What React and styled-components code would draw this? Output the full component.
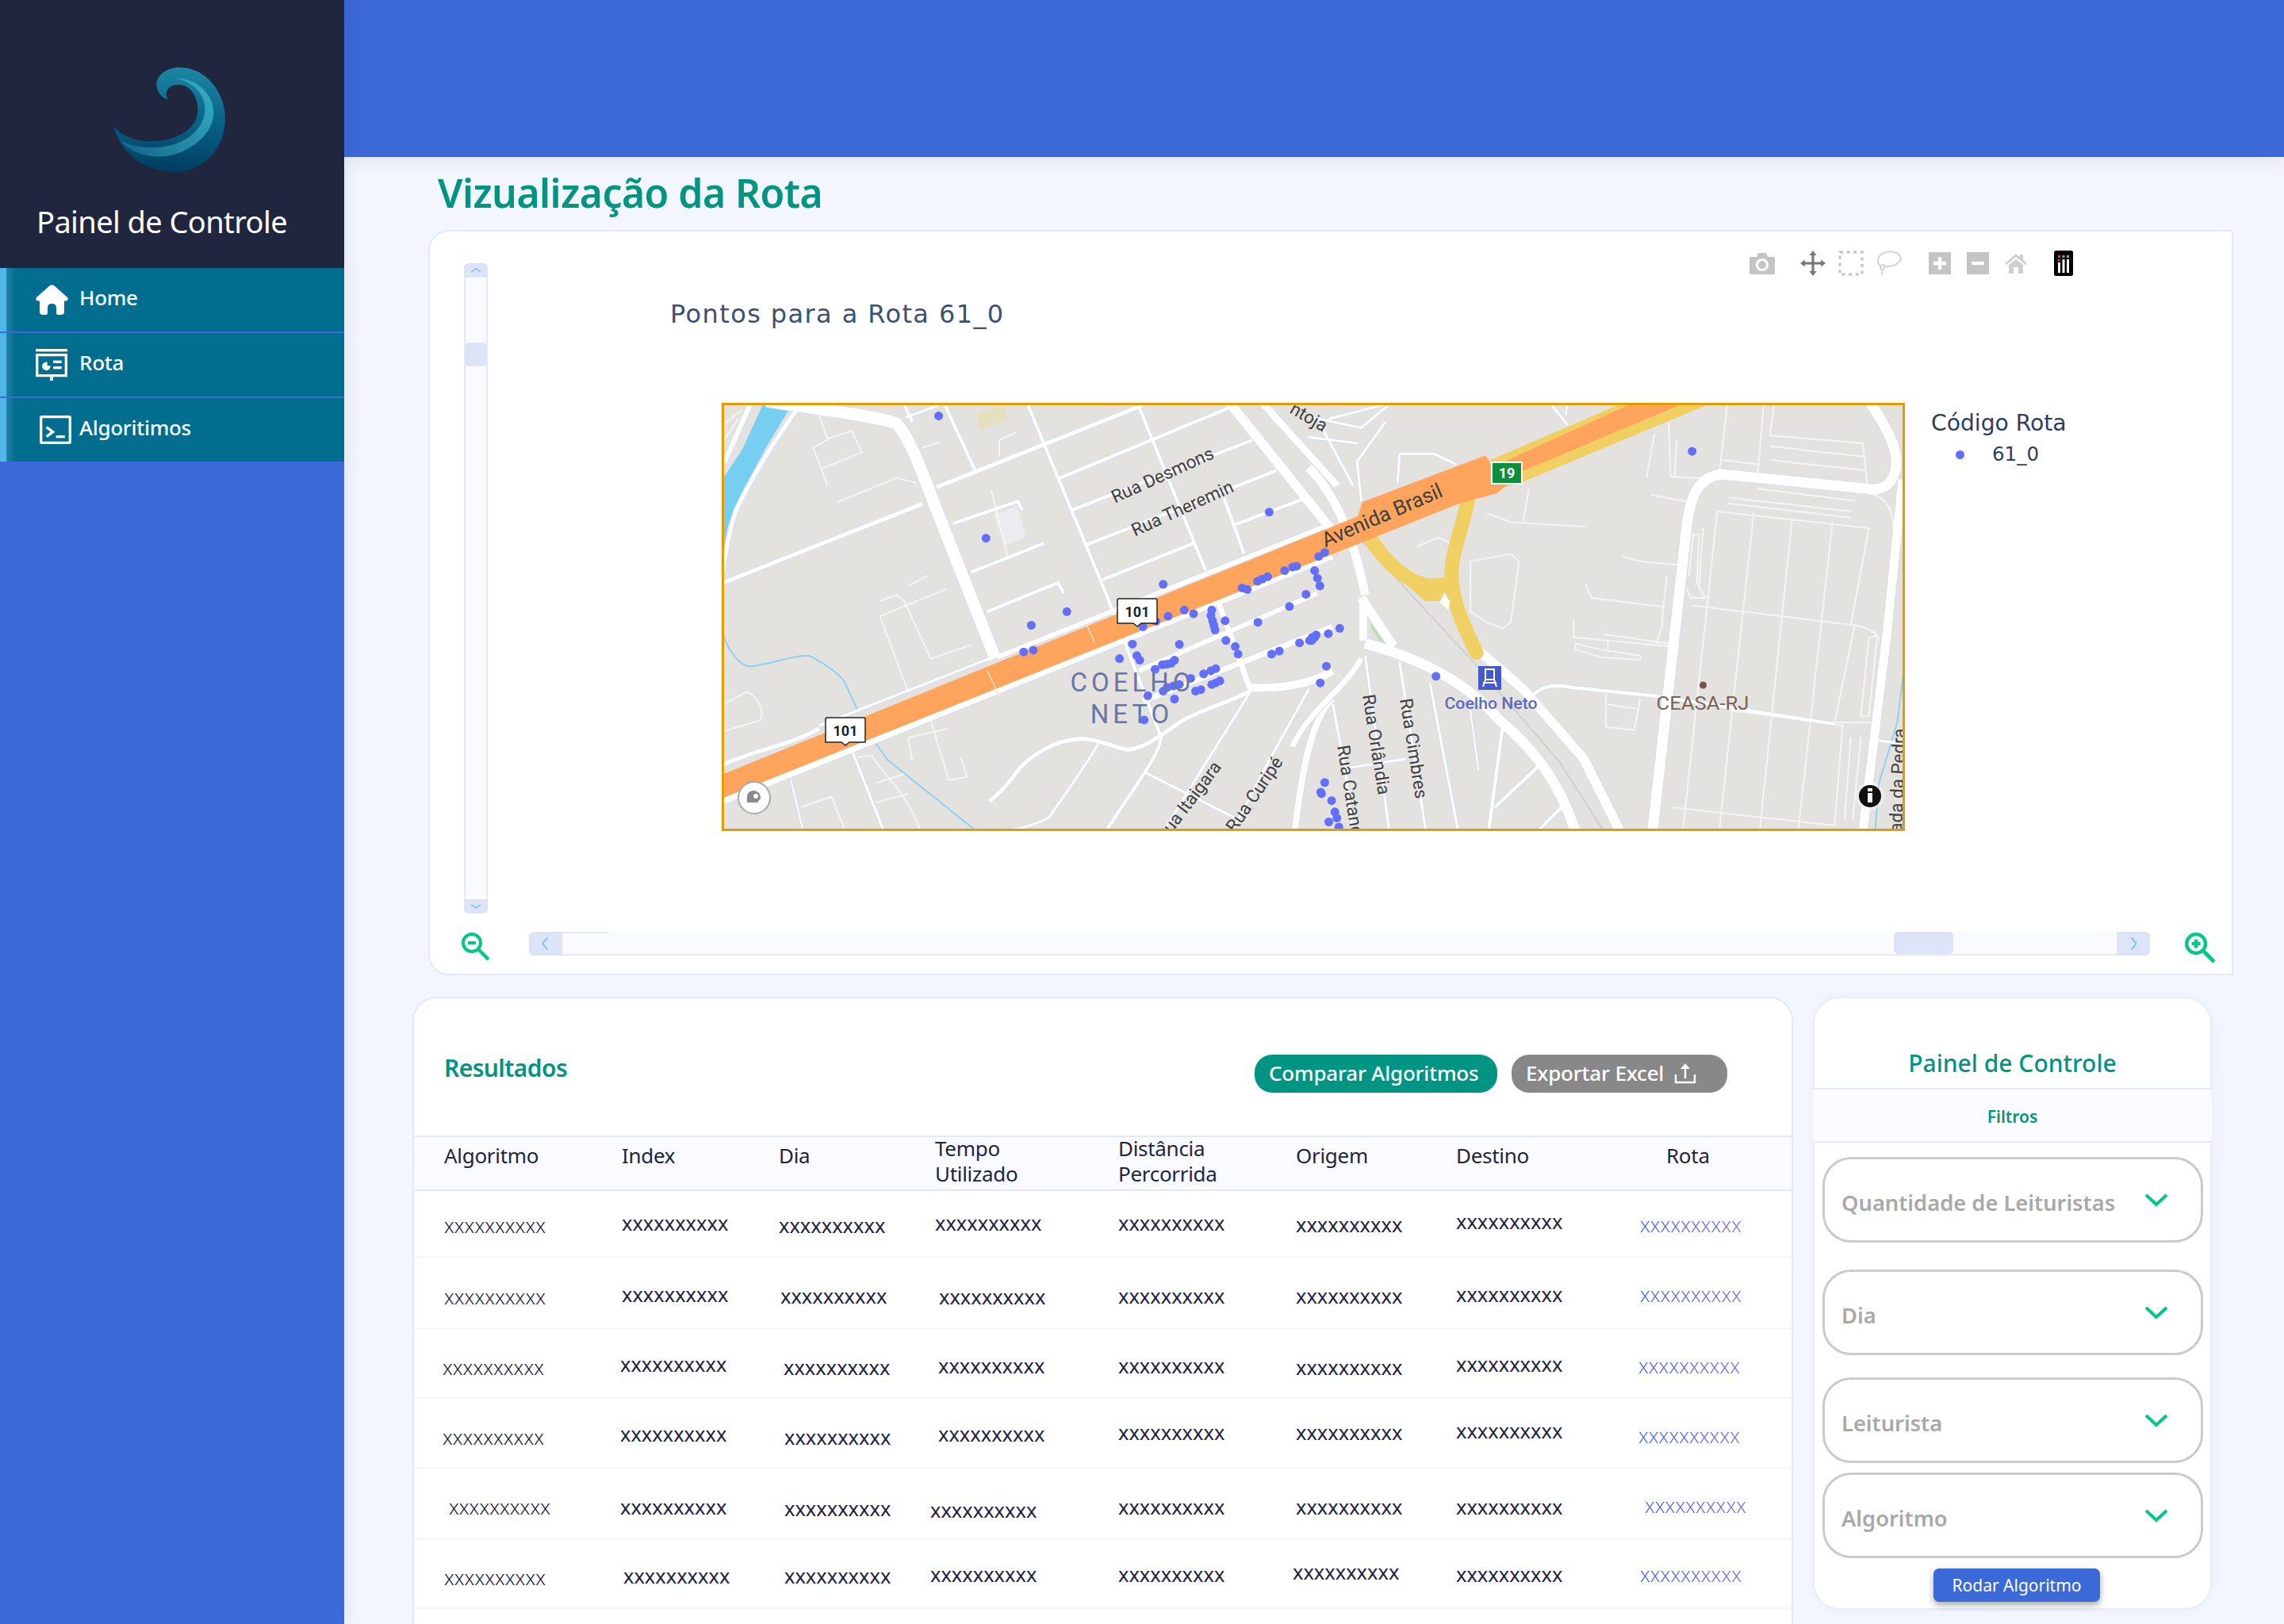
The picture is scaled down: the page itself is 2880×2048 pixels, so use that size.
import React from 'react';
import styled, { createGlobalStyle } from 'styled-components';

const Global = createGlobalStyle`
    html, body {
        margin: 0;
        padding: 0;
        background: #f3f6fe;
        font-family: "Noto Sans", "Open Sans", sans-serif;
    }
    * { box-sizing: border-box; }
`;

const Page = styled.div`
    display: flex;
    width: 2880px;
    height: 2048px;
    overflow: hidden;
`;

/* ---------- sidebar ---------- */
const Sidebar = styled.aside`
    width: 434px;
    flex: none;
    background: #3b69d8;
    box-shadow: 0 0 24px rgba(40, 60, 130, 0.12);
    z-index: 2;
`;
const Brand = styled.div`
    height: 338px;
    background: #21263f;
    padding-top: 60px;
`;
const BrandLogo = styled.svg`
    display: block;
    margin-left: 120px;
`;
const BrandName = styled.div`
    margin: 14px 0 0 46px;
    font-size: 38px;
    line-height: 50px;
    color: #fff;
    letter-spacing: -0.6px;
`;
const NavItem = styled.a`
    display: flex;
    align-items: center;
    height: 80px;
    margin-bottom: 2px;
    padding-left: 45px;
    color: #fff;
    background: linear-gradient(90deg, #4fb7e9 8px, #2481a8 8px, #016e8f 20px);
`;
const NavIcon = styled.span`
    display: flex;
    width: 55px;
    flex: none;
    padding-left: ${(p) => p.$nudge || 0}px;
`;
const NavLabel = styled.span`
    padding-bottom: 7px;
    font-size: 26px;
    font-weight: 500;
    letter-spacing: -0.3px;
`;

/* ---------- main ---------- */
const Main = styled.main`
    flex: 1;
    min-width: 0;
`;
const TopBar = styled.div`
    height: 198px;
    background: #3b69d8;
    box-shadow: 0 0 24px rgba(40, 60, 130, 0.12);
`;
const Body = styled.div`
    padding: 15px 0 0 86px;
`;
const PageTitle = styled.h1`
    margin: 0 0 17px 32px;
    font-size: 50px;
    line-height: 60px;
    font-weight: 600;
    color: #009482;
    letter-spacing: -0.6px;
`;

/* ---------- chart card ---------- */
const ChartCard = styled.section`
    width: 2276px;
    height: 940px;
    margin-left: 20px;
    padding: 24px 0 0 40px;
    background: #fff;
    border: 2px solid #e3e9fb;
    border-radius: 26px 0 0 26px;
`;
const ChartBody = styled.div`
    display: flex;
    align-items: flex-start;
    height: 836px;
`;
const VScroll = styled.div`
    display: flex;
    flex-direction: column;
    width: 30px;
    height: 820px;
    flex: none;
    margin: 16px 0 0 3px;
    background: #f9fbff;
    border: solid #e3e9fb;
    border-width: 0 2px;
    border-radius: 5px;
`;
const VButton = styled.div`
    display: flex;
    align-items: center;
    justify-content: center;
    height: 18px;
    margin: 0 -2px;
    background: #dde4f7;
    border-radius: ${(p) => (p.$end ? '0 0 6px 6px' : '6px 6px 0 0')};
`;
const VThumb = styled.div`
    height: 30px;
    margin: 82px -1px auto;
    background: #dde4f7;
    border-radius: 5px;
`;
const Plot = styled.div`
    flex: 1;
    padding-right: 200px;
`;
const ModeBar = styled.div`
    display: flex;
    justify-content: flex-end;
    align-items: center;
    height: 32px;
`;
const ModeIcon = styled.svg`
    display: block;
    flex: none;
    margin-left: ${(p) => p.$gap || 0}px;
`;
const PlotTitle = styled.div`
    margin: 28px 0 0 230px;
    font-family: "DejaVu Sans", Verdana, sans-serif;
    font-size: 32px;
    line-height: 40px;
    letter-spacing: 1.4px;
    color: #3c5070;
`;
const PlotRow = styled.div`
    display: flex;
    margin: 92px 0 0 295px;
`;
const MapFrame = styled.div`
    width: 1492px;
    height: 540px;
    flex: none;
    border: 3px solid #e69b00;
    background: #e4e2df;
    overflow: hidden;
`;
const Legend = styled.div`
    margin: 8px 0 0 33px;
    font-family: "DejaVu Sans", Verdana, sans-serif;
    color: #2a3f5f;
`;
const LegendTitle = styled.div`
    font-size: 28.2px;
    line-height: 36px;
    white-space: nowrap;
`;
const LegendEntry = styled.div`
    display: flex;
    align-items: center;
    margin: 3px 0 0 31px;
    font-size: 24.5px;
    line-height: 36px;
`;
const LegendDot = styled.i`
    width: 11px;
    height: 11px;
    margin-right: 35px;
    border-radius: 50%;
    background: #636efa;
`;
const ScrollRow = styled.div`
    display: flex;
    align-items: flex-start;
    margin-top: 24px;
`;
const HScroll = styled.div`
    position: relative;
    display: flex;
    width: 2044px;
    height: 30px;
    margin: -1px 44px 0 50px;
    background: #f9fbff;
    border-bottom: 2px solid #e3e9fb;
    border-radius: 6px;
    &::before {
        content: '';
        position: absolute;
        left: 42px;
        top: 0;
        width: 58px;
        height: 2px;
        background: #e3e9fb;
    }
`;
const HButton = styled.div`
    display: flex;
    align-items: center;
    justify-content: center;
    width: 42px;
    height: 30px;
    flex: none;
    background: #dde4f7;
    border-radius: ${(p) => (p.$end ? '0 6px 6px 0' : '6px 0 0 6px')};
`;
const HThumb = styled.div`
    width: 75px;
    height: 28px;
    margin: 0 auto 0 1679px;
    background: #dde4f7;
    border-radius: 5px;
`;

/* ---------- lower row ---------- */
const LowerRow = styled.div`
    display: flex;
    gap: 25px;
    margin-top: 27px;
`;
const ResultsCard = styled.section`
    width: 1741px;
    height: 800px;
    flex: none;
    background: #fff;
    border: 2px solid #e3e9fb;
    border-radius: 30px 30px 0 0;
`;
const ResultsHead = styled.div`
    display: flex;
    align-items: flex-start;
    height: 173px;
    padding: 71px 81px 0 38px;
`;
const ResultsTitle = styled.h2`
    margin: -3px auto 0 0;
    font-size: 30px;
    line-height: 40px;
    font-weight: 600;
    color: #009482;
    letter-spacing: -0.6px;
`;
const PillButton = styled.button`
    display: flex;
    align-items: center;
    height: 48px;
    width: ${(p) => p.$width}px;
    margin-left: 18px;
    padding: 0 0 3px 18px;
    border: none;
    border-radius: 22px;
    background: ${(p) => p.$bg};
    color: #fff;
    font-family: inherit;
    font-size: 26px;
    font-weight: 500;
    letter-spacing: -0.2px;
`;
const GridRow = styled.div`
    display: grid;
    grid-template-columns: 224px 198px 197px 231px 224px 202px 232px 193px;
    align-items: center;
    height: ${(p) => p.$h}px;
    padding-left: 38px;
`;
const HeadRow = styled(GridRow)`
    background: #f9fbff;
    border: solid #e3e9fb;
    border-width: 2px 0;
`;
const BodyRow = styled(GridRow)`
    border-bottom: 2px solid #f4f6fb;
`;
const HeadCell = styled.div`
    font-size: 26px;
    line-height: 32px;
    color: #1f2540;
    letter-spacing: -0.3px;
    transform: translate(${(p) => p.$dx || 0}px, ${(p) => (p.$dy || 0) - 3}px);
`;
const Cell = styled.div`
    font-size: 25.4px;
    font-weight: ${(p) => (p.$thin ? 300 : 400)};
    line-height: 30px;
    color: #1f2540;
    transform: translate(${(p) => p.$dx}px, ${(p) => p.$dy - 1.5}px);
`;
const RouteLink = styled.a`
    font-weight: 300;
    color: transparent;
    background: linear-gradient(90deg, #4566f5, #7d6cf0);
    -webkit-background-clip: text;
    background-clip: text;
`;

/* ---------- control panel ---------- */
const ControlPanel = styled.section`
    width: 503px;
    height: 773px;
    flex: none;
    background: #fff;
    border: 2px solid #e8ecf6;
    border-radius: 34px;
    box-shadow: 0 0 12px rgba(80, 100, 170, 0.05);
`;
const PanelTitle = styled.h2`
    height: 113px;
    margin: 0;
    padding-top: 62px;
    text-align: center;
    font-size: 30px;
    line-height: 40px;
    font-weight: 500;
    color: #009482;
`;
const FilterBand = styled.div`
    height: 69px;
    margin: 0 -2px 18px;
    background: #f9fbff;
    border: solid #e3e9fb;
    border-width: 2px 0;
    text-align: center;
    font-size: 21px;
    line-height: 68px;
    font-weight: 600;
    color: #009482;
`;
const SelectBox = styled.div`
    display: flex;
    align-items: center;
    justify-content: space-between;
    width: 480px;
    height: 108px;
    margin: ${(p) => p.$top || 0}px 0 0 10px;
    padding: 0 42px 0 21px;
    border: 3px solid #cbcbcb;
    border-radius: 36px;
`;
const SelectLabel = styled.span`
    padding-top: 6px;
    font-size: 27.3px;
    font-weight: 600;
    color: #a9a9a9;
`;
const RunButton = styled.button`
    display: block;
    width: 210px;
    height: 42px;
    margin: 13px 0 0 150px;
    border: none;
    border-radius: 7px;
    background: #3b69d8;
    box-shadow: 0 4px 8px rgba(0, 0, 0, 0.35);
    color: #fff;
    font-family: inherit;
    font-size: 21px;
`;

/* ---------- drawings ---------- */
const WaveLogo = () => (
    <BrandLogo width="200" height="180" viewBox="0 0 600 540">
        <defs>
            <linearGradient id="waveBody" x1="0.5" y1="0" x2="0.45" y2="1">
                <stop offset="0" stopColor="#1c86a4" />
                <stop offset="0.55" stopColor="#075f85" />
                <stop offset="1" stopColor="#013c60" />
            </linearGradient>
            <linearGradient id="waveBand" x1="1" y1="0.2" x2="0" y2="0.9">
                <stop offset="0" stopColor="#33abbf" />
                <stop offset="1" stopColor="#14668c" />
            </linearGradient>
        </defs>
        <path fill="url(#waveBody)" d="M70 298 C85 360 150 470 300 470 C420 470 492 370 492 270 C492 170 420 75 320 75 C270 75 232 105 232 140 C232 165 250 190 275 197 C262 175 270 140 315 140 C360 140 388 185 388 235 C388 300 320 355 210 355 C150 355 100 335 70 298 Z" />
        <path fill="url(#waveBand)" d="M305 118 C370 110 448 170 448 245 C448 340 330 418 230 412 C170 408 120 385 95 350 C140 375 190 380 240 378 C340 370 415 310 415 230 C415 170 360 125 305 118 Z" />
    </BrandLogo>
);

const HomeIcon = () => (
    <svg width="41" height="38" viewBox="0 0 41 38" fill="#fff">
        <path d="M18 1 Q20.5 -0.6 23 1 L40 16 Q42 19 38.5 20.5 H36 V34 Q36 38 32 38 H28 Q26 38 26 36 V29 Q26 24 20.5 24 Q15 24 15 29 V36 Q15 38 13 38 H9 Q5 38 5 34 V20.5 H2.5 Q-1 19 1 16 Z" />
    </svg>
);

const RotaIcon = () => (
    <svg width="40" height="40" viewBox="0 0 120 120" fill="#fff">
        <rect x="0" y="0" width="120" height="10" />
        <path fillRule="evenodd" d="M0 18H120V106H0Z M10 28V96H110V28Z" />
        <rect x="54" y="106" width="12" height="14" />
        <path d="M44 50 A16 16 0 1 0 56 64 H44 Z" />
        <rect x="66" y="44" width="32" height="10" />
        <rect x="66" y="66" width="32" height="10" />
    </svg>
);

const TerminalIcon = () => (
    <svg width="40" height="36" viewBox="0 0 120 108" fill="none" stroke="#fff">
        <rect x="5" y="5" width="110" height="98" rx="3" strokeWidth="10" />
        <path d="M26 44 L50 62 L26 80" strokeWidth="10" />
        <path d="M62 80 H96" strokeWidth="10" />
    </svg>
);

const Chevron = ({ dir, size = 14 }) => (
    <svg width={size} height={size} viewBox="0 0 14 14" fill="none" stroke="#62bcf0" strokeWidth="1.1">
        {dir === 'up' && <path d="M1 9 L7 5 L13 9" />}
        {dir === 'down' && <path d="M1 5 L7 9 L13 5" />}
        {dir === 'left' && <path d="M9 1 L4 7 L9 13" />}
        {dir === 'right' && <path d="M5 1 L10 7 L5 13" />}
    </svg>
);

const ZoomGlass = ({ plus, size = 35 }) => (
    <svg width={size} height={size} viewBox="0 0 35 35" fill="none" stroke="#03c883" strokeWidth="4" style={{ flex: 'none' }}>
        <circle cx="13" cy="13" r="11" />
        <path d="M21 21 L34 34" strokeWidth="4.5" />
        <path d="M8 13 H18" />
        {plus && <path d="M13 8 V18" />}
    </svg>
);

const Modebar = () => (
    <ModeBar>
        <ModeIcon width="32" height="28" viewBox="0 0 32 28" fill="#c4c4c4">
            <path fillRule="evenodd" d="M1 6 H9 L11 1 H21 L23 6 H31 Q32 6 32 7 V27 Q32 28 31 28 H1 Q0 28 0 27 V7 Q0 6 1 6 Z M16 8 A8 8 0 1 0 16.01 24 A8 8 0 1 0 16 8 Z M16 11 A5 5 0 1 1 15.99 21 A5 5 0 1 1 16 11 Z" />
        </ModeIcon>
        <ModeIcon $gap={32} width="32" height="32" viewBox="0 0 32 32" fill="#777">
            <path d="M16 0 L20.5 6 H17.6 V14.4 H26 V11.5 L32 16 L26 20.5 V17.6 H17.6 V26 H20.5 L16 32 L11.5 26 H14.4 V17.6 H6 V20.5 L0 16 L6 11.5 V14.4 H14.4 V6 H11.5 Z" />
        </ModeIcon>
        <ModeIcon $gap={16} width="32" height="32" viewBox="0 0 32 32" fill="none" stroke="#c8c8c8" strokeWidth="3.4">
            <rect x="2" y="2" width="28" height="28" strokeDasharray="4 4.6" />
        </ModeIcon>
        <ModeIcon $gap={16} width="32" height="32" viewBox="0 0 32 32" fill="none" stroke="#d6d6d6" strokeWidth="2.2">
            <path d="M7 21 C1 17 0 10 6 5 C13 0 26 0 30 7 C33 14 24 21 10 20 M7 18 C11 17 11 23 8 24 C5 25 4 21 7 18 M8 24 L7 31" />
        </ModeIcon>
        <ModeIcon $gap={34} width="28" height="28" viewBox="0 0 28 28">
            <rect width="28" height="28" fill="#c4c4c4" />
            <path d="M14 6 V22 M6 14 H22" stroke="#fff" strokeWidth="4.4" />
        </ModeIcon>
        <ModeIcon $gap={20} width="28" height="28" viewBox="0 0 28 28">
            <rect width="28" height="28" fill="#c4c4c4" />
            <path d="M6 14 H22" stroke="#fff" strokeWidth="4.4" />
        </ModeIcon>
        <ModeIcon $gap={20} width="28" height="26" viewBox="0 0 28 26" fill="#cfcfcf">
            <path d="M14 1 L19 5 V2 H23 V8.5 L28 13 L26 15 L14 5 L2 15 L0 13 Z M5 15 L14 8 L23 15 V26 H17 V18 H11 V26 H5 Z" />
        </ModeIcon>
        <ModeIcon $gap={34} width="24" height="32" viewBox="0 0 24 32">
            <rect width="24" height="32" rx="2.5" fill="#000" />
            <g fill="#fff">
                <rect x="5" y="15" width="3" height="13" />
                <rect x="10.5" y="11" width="3" height="17" />
                <rect x="16" y="11" width="3" height="17" />
            </g>
            <g fill="#ff2a6d">
                <rect x="5" y="6" width="3" height="3" />
                <rect x="5" y="11" width="3" height="2.5" />
            </g>
            <g fill="#9a9aa8">
                <rect x="10.5" y="6" width="3" height="3" />
                <rect x="16" y="6" width="3" height="3" />
            </g>
        </ModeIcon>
    </ModeBar>
);

/* ---------- map ---------- */
const MapSvg = styled.svg`
    display: block;
    path.scaled, polygon.scaled { vector-effect: non-scaling-stroke; }
    text { font-family: Roboto, "Liberation Sans", sans-serif; }
`;

// the two tables below are traced in the stretched crop coordinates, the groups scale them back
const LEFT_TF = 'translate(880 490) scale(0.5102 0.3827)';
const RIGHT_TF = 'translate(1650 490) scale(0.5102 0.3827)';

const LEFT_ROADS = [
    ['M170 40 C300 70 440 90 490 115 C525 160 555 280 590 400 L735 890', 15],
    ['M130 50 L65 245', 6],
    ['M245 68 C190 170 130 300 95 400 C75 470 68 560 62 600', 5],
    ['M62 640 L555 380', 5], ['M590 325 L1100 55', 5], ['M510 52 L530 110', 4], ['M515 95 L600 52', 3],
    ['M610 52 L685 270', 4], ['M815 52 L1010 680 L1145 1150 C1140 1210 1080 1310 1010 1455', 4],
    ['M895 295 L1310 65', 4], ['M925 400 L1370 170', 4], ['M960 515 L1430 270', 4], ['M1000 630 L1225 510', 4],
    ['M1325 450 L1495 365', 4], ['M1090 60 L1255 600', 4], ['M1300 360 L1350 545', 4],
    ['M1310 40 L1568 470', 12], ['M1390 40 L1580 320', 9],
    ['M630 445 L790 372 L802 400', 4], ['M675 605 L855 510', 4], ['M715 735 L890 640 L905 675', 4],
    ['M62 1360 L1568 552', 8], ['M740 885 L1568 445', 6], ['M300 1110 L720 890', 3],
    ['M1285 700 L1368 1000', 7], ['M1100 1030 L1568 785', 7], ['M1090 930 L1530 675', 6],
    ['M1365 985 C1450 990 1520 970 1568 930', 10],
    ['M1360 1000 C1300 1040 1240 1060 1190 1100 C1130 1160 1090 1190 1060 1190 C1020 1180 980 1150 940 1155 C880 1160 820 1210 790 1260 C770 1300 740 1340 720 1360', 5],
    ['M990 1170 C950 1260 900 1350 870 1410 C850 1430 800 1450 770 1455', 3],
    ['M1365 1000 L1215 1320 L1150 1460', 3], ['M1105 1265 L1350 1430', 3], ['M1510 990 L1410 1230 L1320 1460', 3],
    ['M1568 1020 C1510 1100 1490 1300 1475 1460', 8], ['M62 1240 C120 1200 240 1170 300 1120', 5],
    ['M380 1190 L460 1460', 3], ['M230 1290 L260 1460', 2],
];
const LEFT_LANES = [
    'M300 90 L320 165 L380 140 L405 210 L305 265 L285 195 L325 165', 'M305 265 L320 320', 'M345 375 L490 295 L540 310',
    'M450 700 L490 680 L510 700 L575 890 L675 845', 'M450 750 L615 660', 'M520 650 L570 615', 'M450 750 L520 1000',
    'M62 1040 L120 1000 C150 1010 170 1080 150 1095 L62 1130', 'M575 1090 L620 1290 L665 1280 L650 1215',
    'M520 1150 L530 1230', 'M520 1150 L620 1120', 'M395 1215 L430 1210 C470 1290 520 1340 550 1460',
    'M440 1300 L510 1270', 'M440 1365 L520 1335', 'M255 1380 L330 1345 L365 1460', 'M62 120 L110 70', 'M65 170 L100 100',
    'M725 335 L765 550', 'M745 225 L745 170 L785 145', 'M555 195 L600 175',
];
const RIGHT_ROADS = [
    ['M1385 40 C1430 130 1470 220 1445 290 C1430 335 1400 335 1380 330 L1020 282 C970 290 945 340 935 450 L850 1460', 13],
    ['M1468 300 L1430 800 L1370 1460', 11],
    ['M0 260 C60 340 110 480 140 680', 11],
    ['M140 840 C250 880 380 950 470 1090 C560 1190 620 1300 660 1460', 13],
    ['M400 840 L530 990 L680 1220 L770 1460', 12], ['M130 690 L210 850', 12],
    ['M135 830 L135 690', 10], ['M130 890 C90 990 0 1060 -40 1180', 7],
    ['M555 1010 C580 975 620 975 650 985 L870 1015 L1130 1070 L1300 1105', 4],
    ['M140 880 L200 1460', 3], ['M225 900 L290 1460', 3], ['M60 1040 L90 1250 L110 1460', 3], ['M100 1250 L240 1220', 3],
    ['M300 970 L370 1460', 3], ['M400 1060 L420 1260', 2], ['M480 1110 L445 1460', 4], ['M580 1230 L460 1380', 4], ['M640 1360 L565 1460', 4],
    ['M50 100 L190 52', 3], ['M10 95 L130 130 L200 52', 3], ['M190 110 L120 240 L130 370', 3], ['M0 160 L120 180', 3], ['M30 120 L110 320', 3],
    ['M225 215 L310 215 L365 250', 3], ['M225 215 L220 310', 3], ['M600 52 L640 120', 3], ['M640 52 L635 90', 2],
    ['M1410 1160 L1468 1170', 3],
];
const RIGHT_LANES = [
    'M1035 52 L1015 280', 'M1125 52 L1110 280', 'M1150 52 L1140 155 L1370 180 L1380 310', 'M1140 190 L1375 225', 'M1140 235 L1375 270',
    'M1110 330 L1350 370', 'M1040 360 L1340 405', 'M1035 378 L1340 425', 'M1010 405 L925 1460', 'M1100 410 L1015 1460', 'M1195 430 L1115 1460', 'M1295 440 L1210 1460',
    'M1010 405 L1385 460 L1340 780', 'M950 715 L1350 780 L1300 1100', 'M1040 1060 L1320 1110 L1300 1440', 'M900 1380 L1300 1440',
    'M1380 345 C1420 350 1445 390 1445 455', 'M1350 780 C1390 790 1410 810 1410 830', 'M1300 1100 L1390 1100',
    'M270 520 L320 490 L370 520', 'M400 570 L500 545 L520 570 L500 770 L480 790 L440 770 L400 735 L400 570', 'M440 410 L500 440 L685 455', 'M545 330 L530 440',
    'M890 110 L895 290 L1020 300', 'M910 170 L905 290', 'M855 150 L835 295', 'M1020 235 L1115 250', 'M845 350 L945 375', 'M775 550 C800 570 850 575 915 580',
    'M685 645 L700 690 L880 720', 'M655 760 L655 820 L895 850', 'M730 810 L890 840', 'M660 840 L720 860 L820 880 L820 895 L720 885 L660 860 Z', 'M740 830 V860',
    'M735 1005 L735 1115 L805 1125 L820 1020', 'M735 1040 L810 1055', 'M885 620 C880 700 870 760 875 780 L860 840', 'M940 620 L950 480 L965 480 L960 640 L980 690 L945 690 L935 660', 'M975 460 L965 660',
    'M1385 820 L1365 1080 L1385 1080 L1405 815 Z', 'M1340 1150 L1325 1420', 'M1365 1150 L1345 1420',
];
const LEFT_DOTS = [
    [595, 90], [712, 493], [1412, 407], [1150, 645], [912, 735], [824, 780], [805, 868], [829, 862], [1100, 785], [1132, 767], [1162, 750], [1202, 730], [1225, 742],
    [1270, 730], [1268, 748], [1272, 765], [1275, 780], [1278, 795], [1303, 765], [1345, 657], [1358, 662], [1383, 635], [1395, 628], [1408, 620], [1450, 600], [1470, 588],
    [1480, 585], [1503, 678], [1462, 718], [1384, 770], [1074, 842], [1190, 843], [1305, 830], [1328, 850], [1335, 875], [1042, 890], [1085, 880], [1092, 895], [1130, 925],
    [1148, 910], [1160, 908], [1170, 905], [1178, 895], [1250, 940], [1268, 930], [1280, 923], [1218, 955], [1190, 975], [1175, 980], [1160, 985], [1150, 997], [1112, 1012],
    [1178, 1023], [1230, 997], [1243, 992], [1270, 975], [1280, 970], [1290, 963], [1103, 1092], [1418, 875], [1437, 865], [1487, 838], [1512, 830], [1518, 820], [1528, 812],
];
const RIGHT_DOTS = [
    [948, 207], [315, 948], [44, 915], [29, 970], [77, 790], [49, 808], [15, 820], [8, 830], [40, 540], [25, 553], [15, 600], [22, 625], [28, 650], [40, 1298], [32, 1335],
    [57, 1358], [65, 1395], [70, 1415], [50, 1428], [75, 1445], [30, 1330],
];
const toMap = (origin) => ([x, y]) => [origin + x * 0.5102, 490 + y * 0.3827];

const RoadLayer = ({ roads, lanes }) => (
    <>
        {roads.map(([d, w]) => (
            <path key={d} className="scaled" d={d} fill="none" stroke="#d6ddf1" strokeWidth={w + 2} />
        ))}
        {lanes.map((d) => (
            <path key={d} className="scaled" d={d} fill="none" stroke="#f5f5f7" strokeWidth="2" />
        ))}
        {roads.map(([d, w]) => (
            <path key={d} className="scaled" d={d} fill="none" stroke="#fff" strokeWidth={w} />
        ))}
    </>
);

const RouteShield = ({ x, y, label }) => (
    <g transform={`translate(${x} ${y})`}>
        <path d="M2 0 H48 Q50 0 50 2 V31 H30 L25 35 L20 31 H0 V2 Q0 0 2 0 Z" fill="#fff" stroke="#222" strokeWidth="1.5" />
        <text x="25" y="23" textAnchor="middle" fontSize="18" fontWeight="700" fill="#222">{label}</text>
    </g>
);

const StreetLabel = ({ x, y, angle, anchor = 'middle', size = 22.5, children }) => (
    <text x={x} y={y} fontSize={size} fill="#3f3f3f" textAnchor={anchor} transform={`rotate(${angle} ${x} ${y})`}>
        {children}
    </text>
);

const RouteMap = () => (
    <MapSvg width="1486" height="534" viewBox="913 511 1486 534">
        <rect x="900" y="500" width="1520" height="560" fill="#e4e2df" />
        <g transform={LEFT_TF}>
            <polygon points="690,85 755,55 765,100 695,135" fill="#e6dfbc" />
            <polygon points="730,415 790,385 810,490 760,520" fill="#ebecef" />
            <polygon points="165,40 232,55 170,190 110,340 75,450 62,540 50,540 50,320 110,200" fill="#76cff0" />
            <path className="scaled" d="M62 810 C80 880 110 920 135 915 C190 905 230 880 275 880 C320 910 360 950 365 975 L395 1060 M440 1170 L470 1225 L690 1460" fill="none" stroke="#8bd2f2" strokeWidth="2" />
            <RoadLayer roads={LEFT_ROADS} lanes={LEFT_LANES} />
        </g>
        <g transform={RIGHT_TF}>
            <polygon points="155,740 170,770 210,850 175,830 155,790" fill="#bcdfa6" />
            <path className="scaled" d="M1470 940 L1455 1100 L1410 1300 L1400 1460" fill="none" stroke="#8bd2f2" strokeWidth="2" />
            <RoadLayer roads={RIGHT_ROADS} lanes={RIGHT_LANES} />
            <path className="scaled" d="M130 500 L400 890 L620 1230 L730 1460" fill="none" stroke="#cfcfcf" strokeWidth="2" />
            <path className="scaled" d="M395 360 C380 470 345 560 355 640 C360 720 390 800 415 870" fill="none" stroke="#f0cf63" strokeWidth="18" strokeLinecap="round" />
            <path className="scaled" d="M150 490 C190 570 240 640 300 650 L355 650" fill="none" stroke="#f0cf63" strokeWidth="18" />
            <polygon points="232,635 350,620 325,700 288,700" fill="#f0cf63" />
            <polygon points="335,680 350,700 345,730 325,705" fill="#fff" />
            <polygon points="450,235 790,40 1010,40 525,310 430,345" fill="#f0cf63" />
        </g>
        <polygon points="905,979 1712,651 1718,633 1874,574 1884,588 2066,505 2132,505 1920,594 1888,622 1840,635 905,1009" fill="#ffa45c" />
        <path d="M1245 846 L1260 878 M1370 787 L1380 810 M1874 574 L1884 590" stroke="#fbe3c9" strokeWidth="1.5" />
        <g fill="#636efa">
            {LEFT_DOTS.map(toMap(880)).concat(RIGHT_DOTS.map(toMap(1650))).map(([x, y]) => (
                <circle key={`${x}-${y}`} cx={x} cy={y} r="5.5" />
            ))}
        </g>

        <StreetLabel x={1469} y={606} angle={-24.5}>Rua Desmons</StreetLabel>
        <StreetLabel x={1494} y={648} angle={-24.5}>Rua Theremin</StreetLabel>
        <StreetLabel x={1746} y={658} angle={-23.5} size={26}>Avenida Brasil</StreetLabel>
        <StreetLabel x={1625} y={520} angle={30} anchor="start">ntoja</StreetLabel>
        <StreetLabel x={1505} y={1015} angle={-53}>Rua Itaigara</StreetLabel>
        <StreetLabel x={1588} y={1006} angle={-56}>Rua Curipé</StreetLabel>
        <StreetLabel x={1718} y={877} angle={81} anchor="start">Rua Orlândia</StreetLabel>
        <StreetLabel x={1765} y={882} angle={81} anchor="start">Rua Cimbres</StreetLabel>
        <StreetLabel x={1686} y={941} angle={81} anchor="start">Rua Catanduvas</StreetLabel>
        <StreetLabel x={2398} y={1050} angle={-88} anchor="start">ada da Pedra</StreetLabel>

        <text x="1428" y="872" textAnchor="middle" fontSize="33" letterSpacing="5" fill="#6a75a6">COELHO</text>
        <text x="1427" y="912" textAnchor="middle" fontSize="33" letterSpacing="5" fill="#6a75a6">NETO</text>
        <text x="1880" y="894" textAnchor="middle" fontSize="20" fontWeight="500" fill="#5c6ac0" textLength="117" lengthAdjust="spacingAndGlyphs">Coelho Neto</text>
        <text x="2147" y="895" textAnchor="middle" fontSize="24" fill="#7a6255" textLength="117" lengthAdjust="spacingAndGlyphs">CEASA-RJ</text>
        <circle cx="2147.5" cy="864" r="4.5" fill="#7a5443" />

        <RouteShield x={1409} y={755} label="101" />
        <RouteShield x={1041} y={905} label="101" />
        <g transform="translate(1881 583)">
            <rect x="0" y="0" width="38" height="27" fill="#0d8f3b" stroke="#fff" strokeWidth="2" />
            <text x="19" y="20" textAnchor="middle" fontSize="18" fontWeight="700" fill="#fff">19</text>
        </g>
        <g transform="translate(1864 840)">
            <rect width="29" height="30" fill="#4558cc" />
            <path d="M9 4 H20 V17 H9 Z M6 21 H23 M9 17 L6 26 M20 17 L23 26" fill="none" stroke="#fff" strokeWidth="2" />
        </g>

        <g transform="translate(951 1006)">
            <ellipse rx="20" ry="20" fill="#fff" stroke="#aaa" strokeWidth="2" />
            <path d="M0 -9 A9 9 0 0 1 8 1 L4 6 H-9 V-2 A8 8 0 0 1 0 -9 Z" fill="#8a8a8a" />
            <circle cx="2" cy="-2" r="3" fill="#fff" />
        </g>
        <g transform="translate(2358 1004)">
            <circle r="18" fill="#fff" opacity="0.35" />
            <circle r="14" fill="#111" />
            <rect x="-3" y="-4" width="6" height="12" fill="#fff" />
            <rect x="-3" y="-10" width="6" height="4" fill="#fff" />
        </g>
    </MapSvg>
);

/* ---------- table data ---------- */
const COLUMNS = [
    { label: 'Algoritmo', dy: -7 },
    { label: 'Index', dy: -7 },
    { label: 'Dia', dy: -7 },
    { label: <>Tempo<br />Utilizado</> },
    { label: <>Distância<br />Percorrida</> },
    { label: 'Origem', dy: -7 },
    { label: 'Destino', dy: -7 },
    { label: 'Rota', dx: 33, dy: -7 },
];
// height of each row and the [dx, dy] of its cells: the text in this table is not aligned
const ROWS = [
    { h: 84, cells: [[0, 3], [0, 0], [0, 3], [0, 0], [0, 0], [0, 2], [0, -2], [0, 2]] },
    { h: 90, cells: [[0, 6], [0, 3], [2, 5], [5, 6], [0, 5], [0, 5], [0, 3], [0, 3]] },
    { h: 88, cells: [[-2, 6], [-2, 2], [6, 6], [4, 4], [0, 4], [0, 6], [0, 2], [-2, 4]] },
    { h: 88, cells: [[-2, 6], [-2, 2], [7, 6], [4, 2], [0, 0], [0, 0], [0, -2], [-2, 4]] },
    { h: 90, cells: [[6, 5], [-2, 5], [7, 7], [-6, 9], [0, 5], [0, 5], [0, 5], [6, 3]] },
    { h: 87, cells: [[0, 5], [2, 3], [7, 3], [-6, 1], [0, 1], [-4, -2], [0, 1], [0, 1]] },
];
const FILTERS = [
    { label: 'Quantidade de Leituristas', top: 0 },
    { label: 'Dia', top: 34 },
    { label: 'Leiturista', top: 28 },
    { label: 'Algoritmo', top: 12 },
];

export default function App() {
    return (
        <Page>
            <Global />
            <Sidebar>
                <Brand>
                    <WaveLogo />
                    <BrandName>Painel de Controle</BrandName>
                </Brand>
                <nav>
                    <NavItem>
                        <NavIcon><HomeIcon /></NavIcon>
                        <NavLabel>Home</NavLabel>
                    </NavItem>
                    <NavItem>
                        <NavIcon><RotaIcon /></NavIcon>
                        <NavLabel>Rota</NavLabel>
                    </NavItem>
                    <NavItem>
                        <NavIcon $nudge={5}><TerminalIcon /></NavIcon>
                        <NavLabel>Algoritimos</NavLabel>
                    </NavItem>
                </nav>
            </Sidebar>
            <Main>
                <TopBar />
                <Body>
                    <PageTitle>Vizualização da Rota</PageTitle>
                    <ChartCard>
                        <ChartBody>
                            <VScroll>
                                <VButton><Chevron dir="up" /></VButton>
                                <VThumb />
                                <VButton $end><Chevron dir="down" /></VButton>
                            </VScroll>
                            <Plot>
                                <Modebar />
                                <PlotTitle>Pontos para a Rota 61_0</PlotTitle>
                                <PlotRow>
                                    <MapFrame><RouteMap /></MapFrame>
                                    <Legend>
                                        <LegendTitle>Código Rota</LegendTitle>
                                        <LegendEntry><LegendDot />61_0</LegendEntry>
                                    </Legend>
                                </PlotRow>
                            </Plot>
                        </ChartBody>
                        <ScrollRow>
                            <ZoomGlass />
                            <HScroll>
                                <HButton><Chevron dir="left" size={18} /></HButton>
                                <HThumb />
                                <HButton $end><Chevron dir="right" size={18} /></HButton>
                            </HScroll>
                            <ZoomGlass plus size={38} />
                        </ScrollRow>
                    </ChartCard>
                    <LowerRow>
                        <ResultsCard>
                            <ResultsHead>
                                <ResultsTitle>Resultados</ResultsTitle>
                                <PillButton $bg="#009482" $width={306}>Comparar Algoritmos</PillButton>
                                <PillButton $bg="#888888" $width={272}>
                                    Exportar Excel
                                    <svg width="28" height="28" viewBox="0 0 28 28" fill="none" stroke="#fff" strokeWidth="2.4" style={{ marginLeft: 13 }}>
                                        <path d="M2 16 V26 H26 V16 M14 21 V4" />
                                        <path d="M8 9 L14 2 L20 9 Z" fill="#fff" stroke="none" />
                                    </svg>
                                </PillButton>
                            </ResultsHead>
                            <HeadRow $h={70}>
                                {COLUMNS.map((col, i) => (
                                    <HeadCell key={i} $dx={col.dx} $dy={col.dy}>{col.label}</HeadCell>
                                ))}
                            </HeadRow>
                            {ROWS.map((row, r) => (
                                <BodyRow key={r} $h={row.h}>
                                    {row.cells.map(([dx, dy], c) => (
                                        <Cell key={c} $dx={dx} $dy={dy} $thin={c === 0 || c === 7}>
                                            {c === 7 ? <RouteLink>xxxxxxxxxx</RouteLink> : 'xxxxxxxxxx'}
                                        </Cell>
                                    ))}
                                </BodyRow>
                            ))}
                        </ResultsCard>
                        <ControlPanel>
                            <PanelTitle>Painel de Controle</PanelTitle>
                            <FilterBand>Filtros</FilterBand>
                            {FILTERS.map((filter) => (
                                <SelectBox key={filter.label} $top={filter.top}>
                                    <SelectLabel>{filter.label}</SelectLabel>
                                    <svg width="28" height="17" viewBox="0 0 28 17" fill="none" stroke="#03c883" strokeWidth="4">
                                        <path d="M1 2 L14 14 L27 2" />
                                    </svg>
                                </SelectBox>
                            ))}
                            <RunButton>Rodar Algoritmo</RunButton>
                        </ControlPanel>
                    </LowerRow>
                </Body>
            </Main>
        </Page>
    );
}
